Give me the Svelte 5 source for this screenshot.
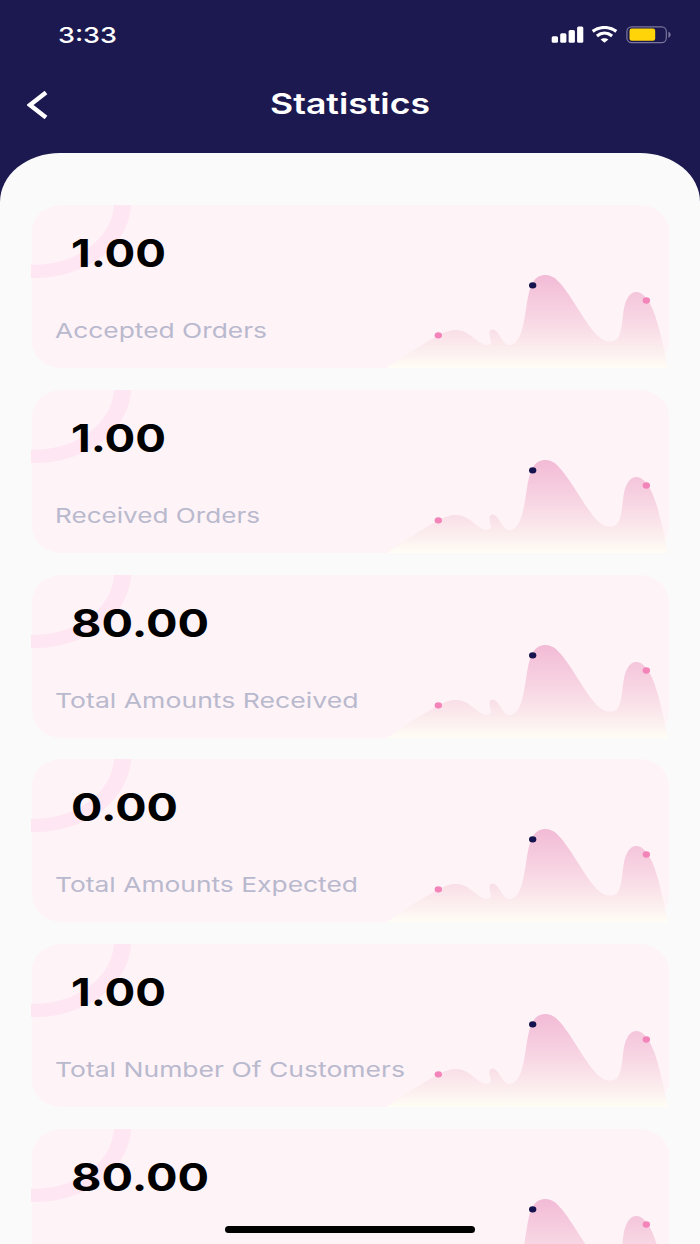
<script>
	const stats = [
		{ value: '1.00', value_width: 95, label: 'Accepted Orders', label_width: 212 },
		{ value: '1.00', value_width: 95, label: 'Received Orders', label_width: 205 },
		{ value: '80.00', value_width: 138, label: 'Total Amounts Received', label_width: 303.5 },
		{ value: '0.00', value_width: 107, label: 'Total Amounts Expected', label_width: 303 },
		{ value: '1.00', value_width: 95, label: 'Total Number Of Customers', label_width: 350 },
		{ value: '80.00', value_width: 138 }
	];
</script>

<!-- Text stretched horizontally to a fixed width -->
{#snippet wide(text, width, height, baseline)}
	<svg {width} {height} overflow="visible">
		<text y={baseline} textLength={width} lengthAdjust="spacingAndGlyphs">{text}</text>
	</svg>
{/snippet}

<div class="screen">
	<div class="status">
		<div class="time">{@render wide('3:33', 59, 17, 16.5)}</div>
		<svg class="icons" width="120" height="18" viewBox="0 0 120 18">
			<g fill="#fff">
				<rect x="0.7" y="10.2" width="6.3" height="6.6" rx="1.5" />
				<rect x="9.2" y="7.2" width="6.2" height="9.6" rx="1.5" />
				<rect x="17.6" y="4.1" width="6.3" height="12.7" rx="1.5" />
				<rect x="26.1" y="0.4" width="6.2" height="16.4" rx="1.5" />
			</g>
			<g fill="none" stroke="#fff" stroke-width="3.2">
				<path d="M41.7 5.4 C48.7 0.2 58.3 0.2 65.3 5.4" />
				<path d="M45.9 9.9 C50.5 6.3 56.5 6.3 61.1 9.9" />
			</g>
			<path d="M53.5 16.8 L49.6 13.5 C51.8 11.7 55.2 11.7 57.4 13.5 Z" fill="#fff" />
			<rect x="75.9" y="0.8" width="39.4" height="15.8" rx="4.6" fill="none" stroke="#78769a" stroke-width="1.2" />
			<rect x="78.5" y="2.6" width="25.7" height="12.2" rx="2.2" fill="#ffd50a" />
			<path d="M117.4 5.8 C120.4 7 120.4 10.6 117.4 11.8 Z" fill="#78769a" />
		</svg>
	</div>

	<header>
		<svg class="back" width="22" height="28" viewBox="0 0 22 28">
			<path d="M19 1.5 L3 14 L19 26.5" fill="none" stroke="#fff" stroke-width="4.4" />
		</svg>
		<h1>{@render wide('Statistics', 160, 28, 22.5)}</h1>
	</header>

	<main>
		{#each stats as stat}
			<section class="card">
				<svg class="ring" width="110" height="80">
					<circle r="69.4" transform="translate(3.5 -3) scale(1.27 1)" fill="none" stroke="#fee6f2" stroke-width="13.4" />
				</svg>
				<svg class="chart" width="281.5" height="95" viewBox="50 235 844.5 285">
					<defs>
						<linearGradient id="fade" x1="0" y1="0" x2="0" y2="1">
							<stop offset="0" stop-color="#f2bbd6" />
							<stop offset="0.5" stop-color="#f8d8e4" />
							<stop offset="0.85" stop-color="#fcf1f0" />
							<stop offset="1" stop-color="#fffdf5" />
						</linearGradient>
					</defs>
					<path
						d="M50 520 C95 488 170 440 205 422 C235 404 265 400 290 415 C315 430 330 451 350 451 C373 451 353 425 358 410 C364 400 375 405 383 416 C395 434 404 452 418 452 C433 452 448 430 453 412 C470 360 468 290 490 260 C505 236 540 235 562 258 C605 300 650 400 690 430 C710 446 735 444 745 426 C762 390 752 340 773 308 C785 289 806 286 822 304 C858 338 875 440 893 520 Z"
						fill="url(#fade)"
					/>
					<ellipse cx="204" cy="422" rx="11" ry="9.5" fill="#f384b9" />
					<ellipse cx="487" cy="272" rx="11" ry="9.5" fill="#17134f" />
					<ellipse cx="828" cy="317.5" rx="11" ry="9.5" fill="#f384b9" />
				</svg>
				<div class="value">{@render wide(stat.value, stat.value_width, 30, 29)}</div>
				{#if stat.label}
					<div class="label">{@render wide(stat.label, stat.label_width, 22, 16)}</div>
				{/if}
			</section>
		{/each}
	</main>

	<div class="home"></div>
</div>

<style>
	:global(body) {
		margin: 0;
		background: #1c1850;
	}

	.screen {
		position: relative;
		display: flex;
		flex-direction: column;
		box-sizing: border-box;
		width: 700px;
		height: 1244px;
		overflow: hidden;
		background: #1c1850;
		font-family: Inter, 'Liberation Sans', sans-serif;
	}

	svg {
		display: block;
	}

	.status {
		display: flex;
		flex: none;
		justify-content: space-between;
		box-sizing: border-box;
		height: 70px;
		padding: 26px 29px 0 58px;
	}

	.time {
		font-size: 22px;
		font-weight: 550;
		fill: #fff;
	}

	header {
		display: grid;
		flex: none;
		grid-template-columns: 1fr auto 1fr;
		align-items: start;
		box-sizing: border-box;
		height: 82.6px;
		padding: 21px 28px 0 27px;
	}

	h1 {
		margin: 0;
		font-size: 28.5px;
		font-weight: 600;
		fill: #fff;
	}

	main {
		display: flex;
		flex: 1;
		flex-direction: column;
		gap: 21.7px;
		padding: 52.6px 31.5px 0;
		border-radius: 60px 60px 0 0 / 49px 49px 0 0;
		background: #fafafa;
		min-height: 0;
	}

	.card {
		position: relative;
		display: flex;
		flex: none;
		flex-direction: column;
		gap: 54px;
		box-sizing: border-box;
		height: 163px;
		padding: 33px 23.4px 0;
		border-radius: 30px / 26px;
		background: #fef3f7;
	}

	.ring {
		position: absolute;
		top: 0;
		left: -0.5px;
	}

	.chart {
		position: absolute;
		right: 0.5px;
		bottom: 0;
	}

	.value {
		position: relative;
		margin-left: 16px;
		font-size: 38.5px;
		font-weight: 700;
		fill: #000;
	}

	.label {
		position: relative;
		font-size: 20.5px;
		fill: #b9b9ce;
	}

	.home {
		position: absolute;
		bottom: 11.5px;
		left: 225px;
		width: 250px;
		height: 7px;
		border-radius: 4px;
		background: #000;
	}
</style>
